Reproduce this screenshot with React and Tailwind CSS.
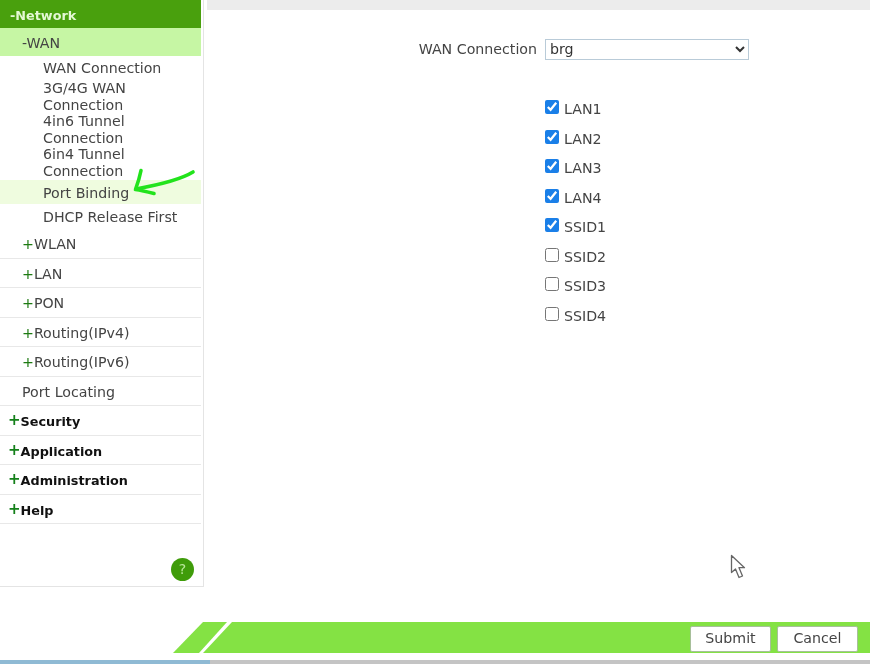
const subItems = [
  { label: 'WAN Connection', rowClass: 'h-6 items-center' },
  { label: '3G/4G WAN Connection', rowClass: 'h-[33px] items-center' },
  { label: '4in6 Tunnel Connection', rowClass: 'h-[33px] items-center' },
  { label: '6in4 Tunnel Connection', rowClass: 'h-[33px] items-center' },
  { label: 'Port Binding', rowClass: 'h-6 items-center mt-px pt-[3px] bg-[#effcdf]' },
  { label: 'DHCP Release First', rowClass: 'h-6 items-center mt-px' },
];

const subMenus = ['WLAN', 'LAN', 'PON', 'Routing(IPv4)', 'Routing(IPv6)'];
const topMenus = ['Security', 'Application', 'Administration', 'Help'];

const ports = [
  { name: 'LAN1', checked: true },
  { name: 'LAN2', checked: true },
  { name: 'LAN3', checked: true },
  { name: 'LAN4', checked: true },
  { name: 'SSID1', checked: true },
  { name: 'SSID2', checked: false },
  { name: 'SSID3', checked: false },
  { name: 'SSID4', checked: false },
];

function Sidebar() {
  return (
    <aside className="relative flex w-[204px] shrink-0 flex-col border-r border-b border-[#e4e4e4] text-[14.2px] text-[#444]">
      <div className="mr-[2px] flex h-[28px] items-center bg-[#49a00d] pl-[10px] pt-[4px] text-[12.8px] font-bold text-[#e4f8d4]">-Network</div>
      <div className="mr-[2px] flex h-[28px] items-center bg-[#c6f6a4] pl-[22px] pt-[3px]">-WAN</div>
      <div className="mr-[2px]">
        {subItems.map((item) => (
          <div key={item.label} className={`flex pl-[43px] leading-[16.5px] ${item.rowClass}`}>
            <span className="w-[150px]">{item.label}</span>
          </div>
        ))}
      </div>
      <div className="mr-[2px]">
        {subMenus.map((name) => (
          <div key={name} className="flex h-[29.5px] items-center border-b border-[#e8e8e8] pl-[22px] pt-[3px]">
            <span className="text-[#1d7a12]">+</span>{name}
          </div>
        ))}
        <div className="flex h-[29.5px] items-center border-b border-[#e8e8e8] pl-[22px] pt-[3px]">Port Locating</div>
        {topMenus.map((name) => (
          <div key={name} className="flex h-[29.5px] items-center border-b border-[#e8e8e8] pl-[8px] pt-[3px] text-[12.8px] font-bold text-[#111]">
            <span className="-mt-[2px] text-[15px] leading-none text-[#14801a]">+</span>{name}
          </div>
        ))}
      </div>
      <div className="mt-auto flex justify-end pr-[9px] pb-[5px]">
        <div className="flex h-[23px] w-[23px] items-center justify-center rounded-full bg-[#3f9c0a] text-[14px] text-[#b9e79a]">?</div>
      </div>
      {/* hand drawn arrow on top of the menu */}
      <svg className="absolute left-[130px] top-[165px]" width="68" height="34" viewBox="0 0 68 34" fill="none">
        <path d="M63 7C50 15 28 20 6 24" stroke="#22e31c" strokeWidth="3.6" strokeLinecap="round" />
        <path d="M11 5.5C9.5 13 7.5 19 5.5 24.5C12 25.5 18 27 24 28.5" stroke="#22e31c" strokeWidth="3.6" strokeLinecap="round" strokeLinejoin="round" />
      </svg>
    </aside>
  );
}

function PortForm() {
  return (
    <main className="relative flex-1 pl-[3px] text-[14.2px] text-[#444]">
      <div className="h-[10px] bg-[#ececec]" />
      <div className="mt-[28px] grid grid-cols-[330px_1fr] items-center gap-x-2">
        <label className="pt-px text-right">WAN Connection</label>
        <select className="h-[21px] w-[204px] border border-[#b9cbd8] bg-white text-[14.2px] text-[#333]">
          <option>brg</option>
        </select>
      </div>
      <div className="mt-[33px] pl-[338px]">
        {ports.map((port) => (
          <div key={port.name} className="flex h-[29.5px] items-center gap-[5px]">
            <input type="checkbox" readOnly checked={port.checked} className="m-0 -mt-[2px] h-[14px] w-[14px] accent-[#1a7fe8]" />
            <span className="pt-[4px]">{port.name}</span>
          </div>
        ))}
      </div>
      {/* mouse pointer caught in the screenshot */}
      <svg className="absolute left-[526px] top-[554px]" width="16" height="26" viewBox="0 0 16 26">
        <path d="M1.5 1.5V18.5L5.5 15L9 23.5L12.5 22L9 13.7H14.5Z" fill="#fff" stroke="#666" strokeWidth="1.3" strokeLinejoin="round" />
      </svg>
    </main>
  );
}

function Footer() {
  return (
    <footer className="flex flex-1 flex-col">
      <div className="mt-[35px] ml-[173px] flex h-[31px]">
        <svg className="shrink-0" width="60" height="31" viewBox="0 0 60 31">
          <polygon points="0,31 26,31 54,0 30,0" fill="#84e244" />
          <polygon points="30,31 60,31 60,0 59,0" fill="#84e244" />
        </svg>
        <div className="flex flex-1 items-center justify-end gap-[6px] bg-[#84e244] pr-[12px] pt-[3px] text-[14.2px] text-[#444]">
          <button className="h-[26px] w-[81px] rounded-[2px] border border-[#a7bf9a] bg-white">Submit</button>
          <button className="h-[26px] w-[81px] rounded-[2px] border border-[#a7bf9a] bg-white">Cancel</button>
        </div>
      </div>
      <div className="mt-auto flex h-[4px]">
        <div className="w-[210px] bg-[#8fbad4]" />
        <div className="flex-1 bg-[#c4c4c4]" />
      </div>
    </footer>
  );
}

export default function App() {
  return (
    <div className="flex h-[664px] w-[870px] flex-col overflow-hidden bg-white font-['DejaVu_Sans',sans-serif] blur-[0.5px]">
      <div className="flex h-[587px]">
        <Sidebar />
        <PortForm />
      </div>
      <Footer />
    </div>
  );
}
